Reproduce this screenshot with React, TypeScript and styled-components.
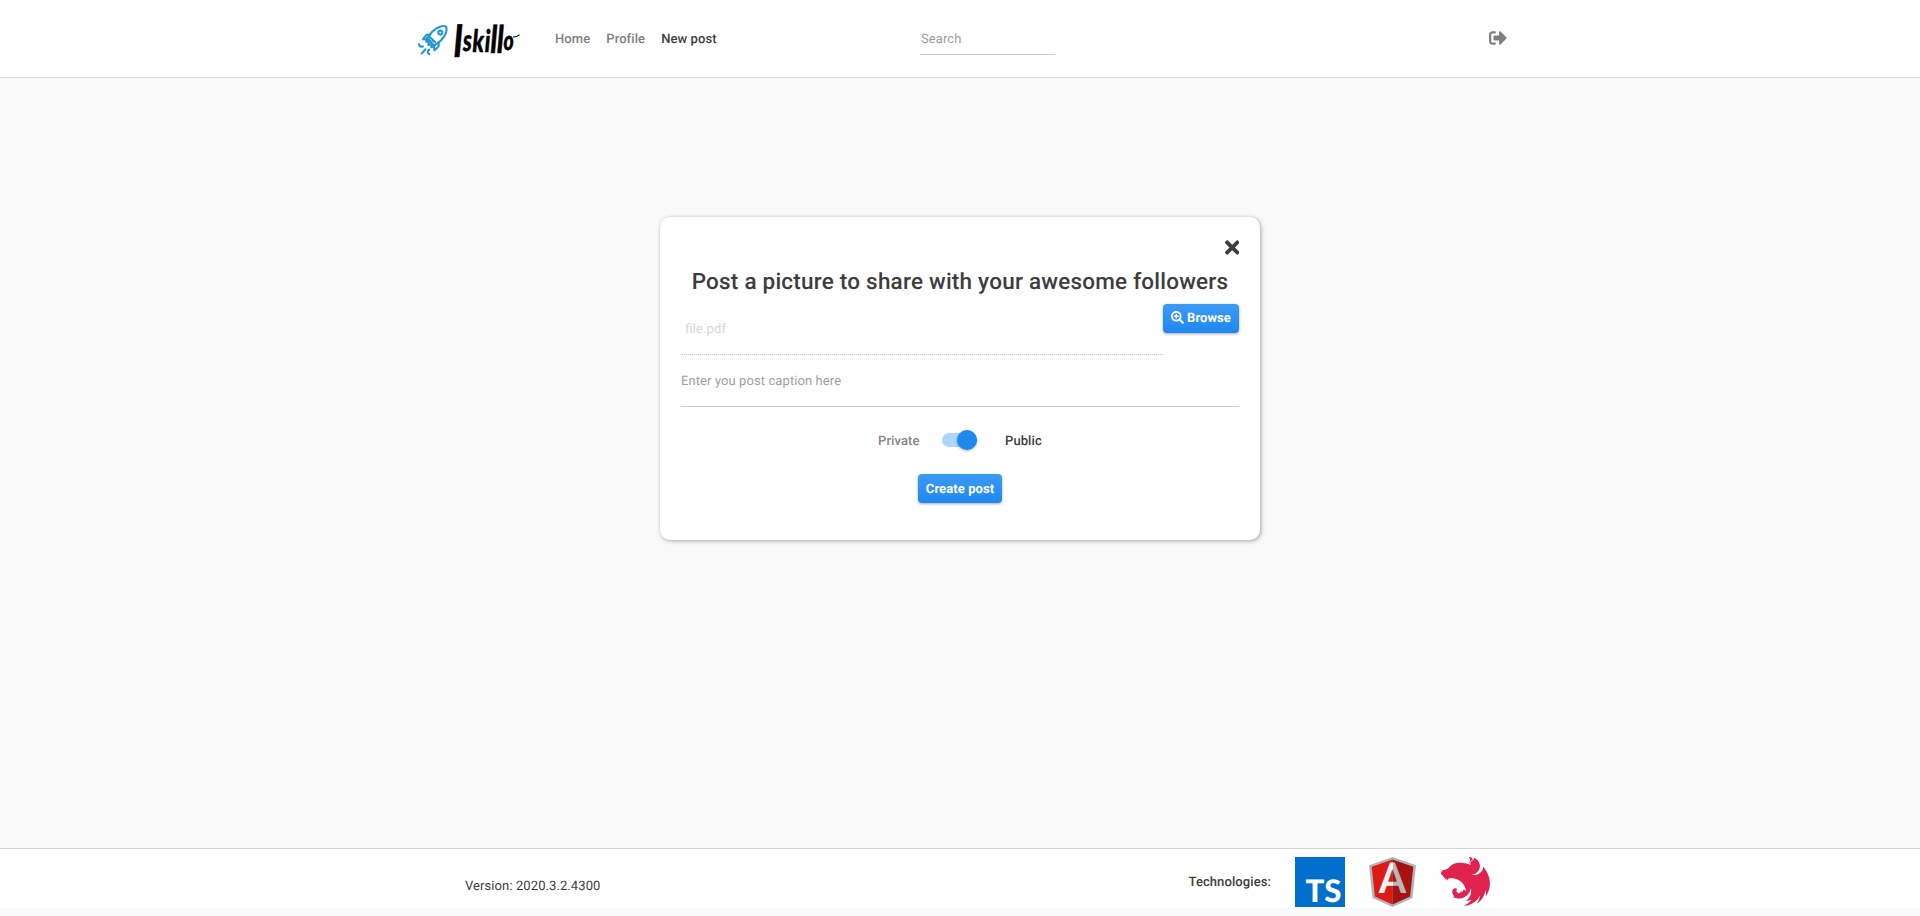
import React from "react";
import styled, { createGlobalStyle } from "styled-components";
import { FaSearchPlus, FaSignOutAlt, FaTimes } from "react-icons/fa";
import { SiNestjs } from "react-icons/si";

const GlobalStyle = createGlobalStyle`
  *, *::before, *::after { box-sizing: border-box; }
  body {
    margin: 0;
    background: #f9f9f9;
    color: #3d3d3d;
    font-family: Roboto, "Liberation Sans", sans-serif;
    font-size: 13px;
    line-height: 20px;
    letter-spacing: 0.09px;
    text-rendering: geometricPrecision;
    -webkit-font-smoothing: antialiased;
  }
`;

const Page = styled.div`
  display: flex;
  flex-direction: column;
  height: 916px;
  padding-bottom: 8px;
`;

const Header = styled.header`
  flex: none;
  height: 78px;
  padding: 0 413px 0 417px;
  display: flex;
  align-items: center;
  background: #fff;
  border-bottom: 1px solid #d4d4d4;
`;

const LogoLink = styled.a`
  display: flex;
  width: 138px;
  svg { display: block; overflow: visible; }
`;

const Nav = styled.nav`
  display: flex;
  gap: 16px;
  width: 365px;
  padding-top: 2px;
`;

const NavItem = styled.a<{ $active?: boolean }>`
  font-weight: 500;
  color: ${(p) => (p.$active ? "#3d3d3d" : "#808080")};
`;

const SearchInput = styled.input`
  width: 135px;
  height: 33px;
  padding: 2px 0 0 1px;
  border: 0;
  border-bottom: 1px solid #d0d0d0;
  outline: 0;
  background: transparent;
  font: inherit;
  letter-spacing: inherit;
  text-rendering: inherit;
  &::placeholder { color: #a0a0a0; }
`;

const LogoutButton = styled.button`
  display: flex;
  margin-left: auto;
  padding: 0 0 2px;
  border: 0;
  background: none;
  color: #7f7f7f;
  font-size: 18px;
`;

const Main = styled.main`
  flex: 1;
  display: flex;
  justify-content: center;
  align-items: flex-start;
  padding-top: 139px;
`;

const Card = styled.section`
  width: 600px;
  height: 323px;
  padding: 20px 21px;
  display: flex;
  flex-direction: column;
  background: #fff;
  border-radius: 10px;
  box-shadow: 1px 1px 4px rgba(0, 0, 0, 0.35);
`;

const CloseButton = styled.button`
  display: flex;
  align-self: flex-end;
  padding: 0 0 1px;
  border: 0;
  background: none;
  color: #3d3d3d;
  font-size: 21px;
  svg { width: 14.500px; }
`;

const Title = styled.h1`
  margin: 8px 0 7px;
  font-size: 22.5px;
  line-height: 30px;
  letter-spacing: 0.22px;
  font-weight: 500;
  text-align: center;
  white-space: nowrap;
`;

const FileRow = styled.div`
  display: flex;
  align-items: flex-start;
  height: 51px;
`;

const FileField = styled.input`
  flex: 1;
  min-width: 0;
  height: 51px;
  padding: 1px 4px 0;
  border: 0;
  border-bottom: 1px dotted #c8c8c8;
  background: transparent;
  font: inherit;
  letter-spacing: inherit;
  text-rendering: inherit;
  &::placeholder { color: #d6d6d6; }
`;

const CaptionField = styled.input`
  height: 52px;
  padding: 1px 0 0;
  border: 0;
  border-bottom: 1px solid #d0d0d0;
  outline: 0;
  font: inherit;
  letter-spacing: inherit;
  text-rendering: inherit;
  &::placeholder { color: #a0a0a0; }
`;

const Button = styled.button<{ $width: number; $textTop?: number }>`
  flex: none;
  display: flex;
  align-items: center;
  justify-content: center;
  gap: 3px;
  width: ${(p) => p.$width}px;
  height: 29px;
  padding: ${(p) => p.$textTop ?? 1}px 0 0;
  border: 0;
  border-radius: 4px;
  background: linear-gradient(#3c9af4, #1e88f0);
  box-shadow: 0 1px 3px rgba(0, 0, 0, 0.35);
  color: #fff;
  font: 700 13px/20px Roboto, "Liberation Sans", sans-serif;
  letter-spacing: 0.08px;
  text-rendering: inherit;
`;

const BrowseIcon = styled(FaSearchPlus)`
  margin-bottom: 3px;
`;

const VisibilityRow = styled.div`
  display: flex;
  align-items: center;
  height: 20px;
  margin: 23px 0 24px 197px;
`;

const VisibilityLabel = styled.span<{ $active?: boolean }>`
  padding-top: 3px;
  font-weight: 500;
  color: ${(p) => (p.$active ? "#3d3d3d" : "#858585")};
`;

const PrivateLabel = styled(VisibilityLabel)`
  width: 42px;
`;

const Switch = styled.button`
  display: flex;
  justify-content: flex-end;
  align-items: center;
  width: 35px;
  height: 14px;
  margin: 0 28px 0 22px;
  padding: 0;
  border: 0;
  border-radius: 7px;
  background: #add6fb;
`;

const Thumb = styled.span`
  flex: none;
  width: 20px;
  height: 20px;
  border-radius: 50%;
  background: #1e88f0;
  box-shadow: 0 1px 3px rgba(0, 0, 0, 0.3);
`;

const SubmitRow = styled.div`
  display: flex;
  justify-content: center;
`;

const Footer = styled.footer`
  flex: none;
  height: 60px;
  padding: 0 430px 0 465px;
  display: flex;
  justify-content: space-between;
  background: #fff;
  border-top: 1px solid #d4d4d4;
`;

const Version = styled.span`
  margin-top: 28px;
`;

const Technologies = styled.div`
  display: flex;
  align-items: flex-start;
  padding-top: 8px;
  svg { display: block; overflow: visible; }
`;

const TechnologiesLabel = styled.span`
  margin: 16px 24px 0 0;
  font-weight: 500;
`;

const AngularSlot = styled.span`
  margin: 0 25px 0 24px;
`;

const Logo = () => (
  <svg width="106" height="42" viewBox="0 0 106 42" role="img" aria-label="Iskillo">
    <g fill="none" stroke="#2496d3" strokeWidth="2.100" strokeLinecap="round" strokeLinejoin="round">
      <path d="M11 20.500C12.500 15 18 10.500 23 8.700c2.300-.8 5-.6 6.200-.1.500 1.700.4 4.100-.3 6.200C27.300 19.500 22 25.500 16.700 27.500Z" />
      <circle cx="23.300" cy="14.600" r="2" />
      <path d="M13.300 16.600 9.500 16.900 6 21.200l5 .3M21.700 24.200l-.2 4.400-4 3.700-.8-4.800" />
      <path d="m10.200 19.500-1 4.200 2.600-.3-.4 3.500 3.100-.9-.2 3.300 3.300-1.500" />
      <path d="m13 19.200 5.500 5.200M10 22l2 1.200m3-1.700 1.500 1.700" />
      <path d="M2 26.300c.2 1.800 1.700 2.700 4 2.200M8.500 31.300 4.700 35.500M12.200 31.500c-2 1.300-2 3.600.1 4.500" />
    </g>
    <text
      transform="translate(6.500 33) scale(.72 1)"
      fontFamily="Lato, sans-serif"
      fontWeight="900"
      fontStyle="italic"
      letterSpacing="0"
      stroke="#000"
      strokeWidth=".5"
      strokeLinejoin="round"
    >
      <tspan x="41.500" y="5.500" fontSize="45">I</tspan>
      <tspan x="55" y="0" fontSize="30">s</tspan>
      <tspan x="68" y="1" fontSize="31">k</tspan>
      <tspan x="85" y="1" fontSize="31">i</tspan>
      <tspan x="93" y="1.500" fontSize="38">l</tspan>
      <tspan x="102" y="1.500" fontSize="38">l</tspan>
      <tspan x="111" y="-1" fontSize="27">o</tspan>
    </text>
    <path d="M96 19q3.500.2 6.500-2.300" fill="none" stroke="#000" strokeWidth="1.200" />
  </svg>
);

const TypeScriptLogo = () => (
  <svg width="50" height="50" viewBox="0 0 50 50">
    <rect width="50" height="50" fill="#0170cc" />
    <text
      x="10.500"
      y="45.300"
      fill="#fff"
      fontFamily="Lato, sans-serif"
      fontWeight="900"
      fontSize="31"
      textLength="36"
      lengthAdjust="spacingAndGlyphs"
      letterSpacing="0"
    >
      TS
    </text>
  </svg>
);

const AngularLogo = () => (
  <svg width="47" height="50" viewBox="0 0 47 50">
    <defs>
      <linearGradient id="angularLetter" gradientUnits="userSpaceOnUse" x1="0" x2="47" y1="0" y2="0">
        <stop offset=".5" stopColor="#f2f2f2" />
        <stop offset=".5" stopColor="#b8b8b8" />
      </linearGradient>
    </defs>
    <path d="M23.500 0 0 8.200 3.500 41 23.500 50 43.500 41 47 8.200Z" fill="#b3b3b3" />
    <path d="M23.500 2.500 2.700 9.800 5.900 39.500 23.500 47.500Z" fill="#dd1b16" />
    <path d="M23.500 2.500 44.300 9.800 41.100 39.500 23.500 47.500Z" fill="#a31412" />
    <text
      x="23.500"
      y="36.200"
      textAnchor="middle"
      fill="url(#angularLetter)"
      fontFamily="Roboto, sans-serif"
      fontWeight="500"
      fontSize="43"
      letterSpacing="0"
    >
      A
    </text>
  </svg>
);

export default function App() {
  return (
    <>
      <GlobalStyle />
      <Page>
        <Header>
          <LogoLink><Logo /></LogoLink>
          <Nav>
            <NavItem>Home</NavItem>
            <NavItem>Profile</NavItem>
            <NavItem $active>New post</NavItem>
          </Nav>
          <SearchInput placeholder="Search" />
          <LogoutButton aria-label="Log out"><FaSignOutAlt /></LogoutButton>
        </Header>
        <Main>
          <Card>
            <CloseButton aria-label="Close"><FaTimes /></CloseButton>
            <Title>Post a picture to share with your awesome followers</Title>
            <FileRow>
              <FileField placeholder="file.pdf" disabled />
              <Button $width={76}><BrowseIcon />Browse</Button>
            </FileRow>
            <CaptionField placeholder="Enter you post caption here" />
            <VisibilityRow>
              <PrivateLabel>Private</PrivateLabel>
              <Switch role="switch" aria-checked="true" aria-label="Public post"><Thumb /></Switch>
              <VisibilityLabel $active>Public</VisibilityLabel>
            </VisibilityRow>
            <SubmitRow><Button $width={84} $textTop={3}>Create post</Button></SubmitRow>
          </Card>
        </Main>
        <Footer>
          <Version>Version: 2020.3.2.4300</Version>
          <Technologies>
            <TechnologiesLabel>Technologies:</TechnologiesLabel>
            <TypeScriptLogo />
            <AngularSlot><AngularLogo /></AngularSlot>
            <SiNestjs size={49} color="#e0234e" />
          </Technologies>
        </Footer>
      </Page>
    </>
  );
}
